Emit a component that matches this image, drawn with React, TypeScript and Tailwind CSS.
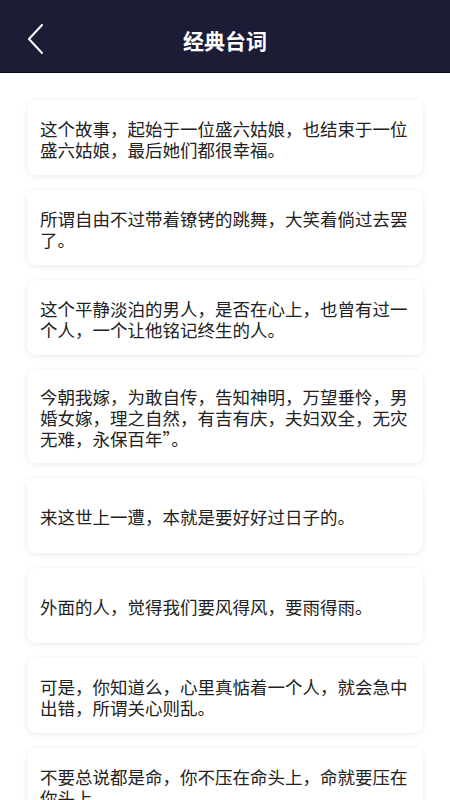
import React from "react";

const quotes: string[] = [
  "这个故事，起始于一位盛六姑娘，也结束于一位盛六姑娘，最后她们都很幸福。",
  "所谓自由不过带着镣铐的跳舞，大笑着倘过去罢了。",
  "这个平静淡泊的男人，是否在心上，也曾有过一个人，一个让他铭记终生的人。",
  "今朝我嫁，为敢自传，告知神明，万望垂怜，男婚女嫁，理之自然，有吉有庆，夫妇双全，无灾无难，永保百年”。",
  "来这世上一遭，本就是要好好过日子的。",
  "外面的人，觉得我们要风得风，要雨得雨。",
  "可是，你知道么，心里真惦着一个人，就会急中出错，所谓关心则乱。",
  "不要总说都是命，你不压在命头上，命就要压在你头上。",
];

export default function App() {
  return (
    <div
      className="w-[450px] h-[800px] overflow-hidden bg-white"
      style={{ fontFamily: '"Noto Sans CJK SC", "Noto Sans", sans-serif' }}
    >
      <header className="relative h-[73px] bg-[#1c1c37] border-b border-[#0b0b16] flex items-center justify-center pt-[9px]">
        <svg
          className="absolute left-[26px] top-[23px]"
          width="20"
          height="32"
          viewBox="0 0 20 32"
          fill="none"
        >
          <polyline
            points="16,2 3,16 16,30"
            stroke="#ffffff"
            strokeWidth="2"
            strokeLinecap="round"
            strokeLinejoin="round"
          />
        </svg>
        <h1 className="text-white text-[21px] font-bold leading-none tracking-[0px]">
          经典台词
        </h1>
      </header>
      <main className="flex flex-col gap-[15px] px-[27px] pt-[27px]">
        {quotes.map((q, i) => (
          <div
            key={i}
            className="min-h-[75px] flex items-center rounded-[9px] bg-white shadow-[0_1px_6px_rgba(0,0,0,0.09)] px-[13px] pt-[16px] pb-[14px]"
          >
            <p className="text-[17.5px] leading-[21px] text-[#222222]">{q}</p>
          </div>
        ))}
      </main>
    </div>
  );
}
